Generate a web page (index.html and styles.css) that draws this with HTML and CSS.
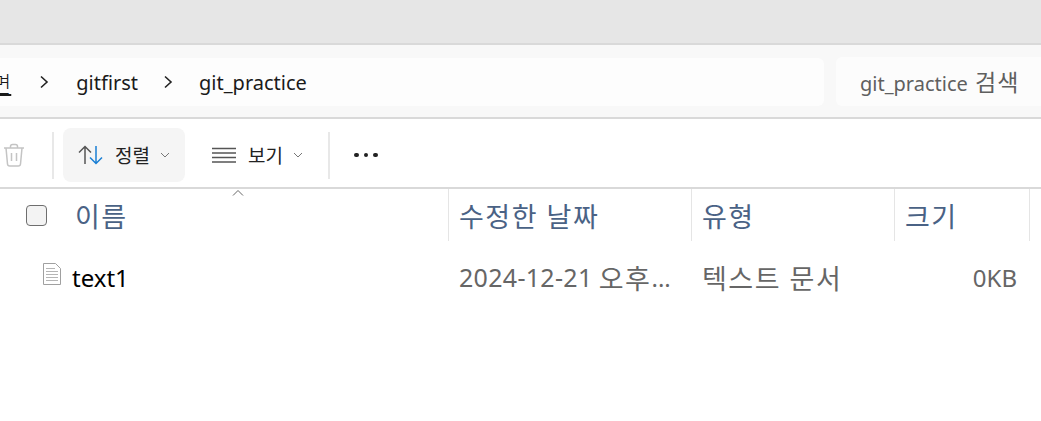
FILE: index.html
```html
<!DOCTYPE html>
<html lang="ko">

<head>
    <meta charset="UTF-8">
    <title>git_practice</title>
    <link rel="stylesheet" href="styles.css">
</head>

<body>
    <div class="title-bar"></div>

    <div class="address-band">
        <div class="path-box">
            <span class="crumb-cut">면</span>
            <svg class="crumb-sep sep-one" width="10" height="14" viewBox="0 0 10 14"><path d="M2 1.5 8 7l-6 5.5" /></svg>
            <span>gitfirst</span>
            <svg class="crumb-sep sep-two" width="10" height="14" viewBox="0 0 10 14"><path d="M2 1.5 8 7l-6 5.5" /></svg>
            <span>git_practice</span>
        </div>
        <div class="search-box">git_practice <span class="ko search-ko">검색</span></div>
    </div>

    <div class="toolbar">
        <svg class="trash-icon" width="22" height="24" viewBox="0 0 22 24">
            <path d="M1 5h20M7.5 5V3.5q0-2 2-2h3q2 0 2 2V5M3 5l1.500 16q.2 2 2.200 2h8.600q2 0 2.200-2L19 5M8.500 10v8M13.500 10v8" />
        </svg>
        <div class="tool-sep sep-first"></div>
        <div class="tool-btn sort-btn">
            <svg class="tool-icon" width="25" height="20" viewBox="0 0 25 20">
                <path class="arrow-up" d="M7 19V1.500M1 7.500l6-6 6 6" />
                <path class="arrow-down" d="M18 1v17.500M12 12.500l6 6 6-6" />
            </svg>
            <span class="tool-label">정렬</span>
            <svg class="chev" width="10" height="6" viewBox="0 0 10 6"><path d="M1 1l4 4 4-4" /></svg>
        </div>
        <div class="tool-btn view-btn">
            <svg class="tool-icon" width="24" height="16" viewBox="0 0 24 16">
                <path class="list-lines" d="M0 1.500h24M0 6h24M0 10.500h24M0 15h24" />
            </svg>
            <span class="tool-label">보기</span>
            <svg class="chev" width="10" height="6" viewBox="0 0 10 6"><path d="M1 1l4 4 4-4" /></svg>
        </div>
        <div class="tool-sep"></div>
        <div class="more-dots"><i></i><i></i><i></i></div>
    </div>

    <div class="file-table">
        <div class="file-row head-row">
            <div class="cell name-cell">
                <svg class="sort-caret" width="12" height="6" viewBox="0 0 12 6"><path d="M1 5.500l5-5 5 5" /></svg>
                <span class="check-box"></span>
                <span class="head-name ko">이름</span>
            </div>
            <div class="cell ko">수정한 날짜</div>
            <div class="cell ko">유형</div>
            <div class="cell ko">크기</div>
            <div class="cell"></div>
        </div>
        <div class="file-row body-row">
            <div class="cell name-cell">
                <svg class="file-icon" width="18" height="22" viewBox="0 0 18 22">
                    <path class="page" d="M.5.500h12l5 5v16H.5z" />
                    <path class="page-lines" d="M3 5.500h9M3 8.500h12M3 11.500h12M3 14.500h12M3 17.500h12" />
                </svg>
                <span class="file-name">text1</span>
            </div>
            <div class="cell"><span class="date-num">2024-12-21</span>&nbsp;<span class="ko">오후</span>...</div>
            <div class="cell ko">텍스트 문서</div>
            <div class="cell size-cell">0KB</div>
            <div class="cell"></div>
        </div>
    </div>
</body>

</html>
```

FILE: styles.css
```css
body {
    font-family: "Noto Sans", "Noto Sans CJK KR", sans-serif;
    background-color: white;
    margin: 0;
    padding: 0;
    height: 100vh;
    overflow: hidden;
}

.ko {
    font-size: 27px;
    letter-spacing: 1.5px;
}

.title-bar {
    height: 43px;
    background-color: #e6e6e6;
}

.address-band {
    display: flex;
    align-items: center;
    gap: 12px;
    height: 72px;
    background-color: #f8f8f8;
    border-top: 2px solid #d9d9d9;
    border-bottom: 2px solid #d9d9d9;
}

.path-box {
    display: flex;
    align-items: center;
    flex: none;
    width: 844px;
    height: 48px;
    margin: 2px 0 0 -20px;
    padding-left: 11px;
    box-sizing: border-box;
    background-color: #fdfdfd;
    border-radius: 6px;
    font-size: 20px;
    color: #1a1a1a;
    white-space: nowrap;
}

.crumb-cut {
    font-size: 22px;
    font-weight: 300;
    text-decoration: underline;
}

.crumb-sep {
    flex: none;
}

.sep-one {
    margin: 0 27px 0 28px;
}

.sep-two {
    margin: 0 26px 0 25px;
}

.crumb-sep path {
    fill: none;
    stroke: #222;
    stroke-width: 1.6;
}

.search-box {
    flex: none;
    width: 240px;
    height: 49px;
    line-height: 51px;
    padding-left: 24px;
    background-color: #fcfcfc;
    border-radius: 6px;
    font-size: 20px;
    color: #5f5f5f;
}

.search-ko {
    margin-left: 2px;
    font-size: 23px;
    letter-spacing: 1px;
}

.toolbar {
    display: flex;
    align-items: center;
    height: 68px;
    padding: 4px 0 0 3px;
    box-sizing: border-box;
}

.trash-icon path {
    fill: none;
    stroke: #c4c4c4;
    stroke-width: 1.5;
}

.tool-sep {
    width: 2px;
    height: 47px;
    background-color: #e8e8e8;
}

.sep-first {
    margin: 0 9px 0 27px;
}

.tool-btn {
    display: flex;
    align-items: center;
    height: 54px;
    box-sizing: border-box;
    border-radius: 8px;
    font-size: 19px;
    color: #222;
}

.sort-btn {
    width: 122px;
    padding-left: 15px;
    background-color: #f5f5f5;
}

.view-btn {
    width: 143px;
    padding-left: 27px;
}

.tool-icon {
    flex: none;
    margin-right: 12px;
}

.arrow-up {
    fill: none;
    stroke: #555;
    stroke-width: 1.5;
}

.arrow-down {
    fill: none;
    stroke: #1a7fd4;
    stroke-width: 1.5;
}

.list-lines {
    fill: none;
    stroke: #555;
    stroke-width: 1.3;
}

.chev {
    flex: none;
    margin-left: 10px;
}

.chev path {
    fill: none;
    stroke: #777;
    stroke-width: 1;
}

.more-dots {
    display: flex;
    gap: 5px;
    margin-left: 24px;
}

.more-dots i {
    width: 4.500px;
    height: 4.500px;
    border-radius: 50%;
    background-color: #222;
}

.file-table {
    border-top: 2px solid #d9d9d9;
}

.file-row {
    display: grid;
    grid-template-columns: 448px 243px 203px 135px 1fr;
}

.head-row {
    height: 52px;
    color: #4a6285;
}

.head-row .cell {
    border-left: 1px solid #e5e5e5;
}

.head-row .cell:first-child {
    border-left: none;
}

.cell {
    display: flex;
    align-items: center;
    padding-left: 10px;
    box-sizing: border-box;
    white-space: nowrap;
}

.name-cell {
    position: relative;
    padding-left: 0;
}

.sort-caret {
    position: absolute;
    left: 232px;
    top: 1px;
}

.sort-caret path {
    fill: none;
    stroke: #666;
    stroke-width: 1;
}

.check-box {
    flex: none;
    width: 19px;
    height: 19px;
    margin-left: 26px;
    border: 1px solid #6e6e6e;
    border-radius: 4px;
    background-color: #f3f3f3;
}

.head-name {
    margin-left: 28px;
}

.body-row {
    height: 72px;
    font-size: 24px;
    color: #666;
}

.body-row .cell {
    padding-left: 11px;
}

.body-row .name-cell {
    padding-left: 0;
}

.date-num {
    font-size: 25px;
    letter-spacing: 0.3px;
}

.file-icon {
    flex: none;
    margin: 0 11px 6px 43px;
}

.page {
    fill: #fff;
    stroke: #a0a0a0;
}

.page-lines {
    fill: none;
    stroke: #b5b5b5;
}

.file-name {
    color: #000;
}

.body-row .size-cell {
    justify-content: flex-end;
    padding-right: 12px;
}
```
